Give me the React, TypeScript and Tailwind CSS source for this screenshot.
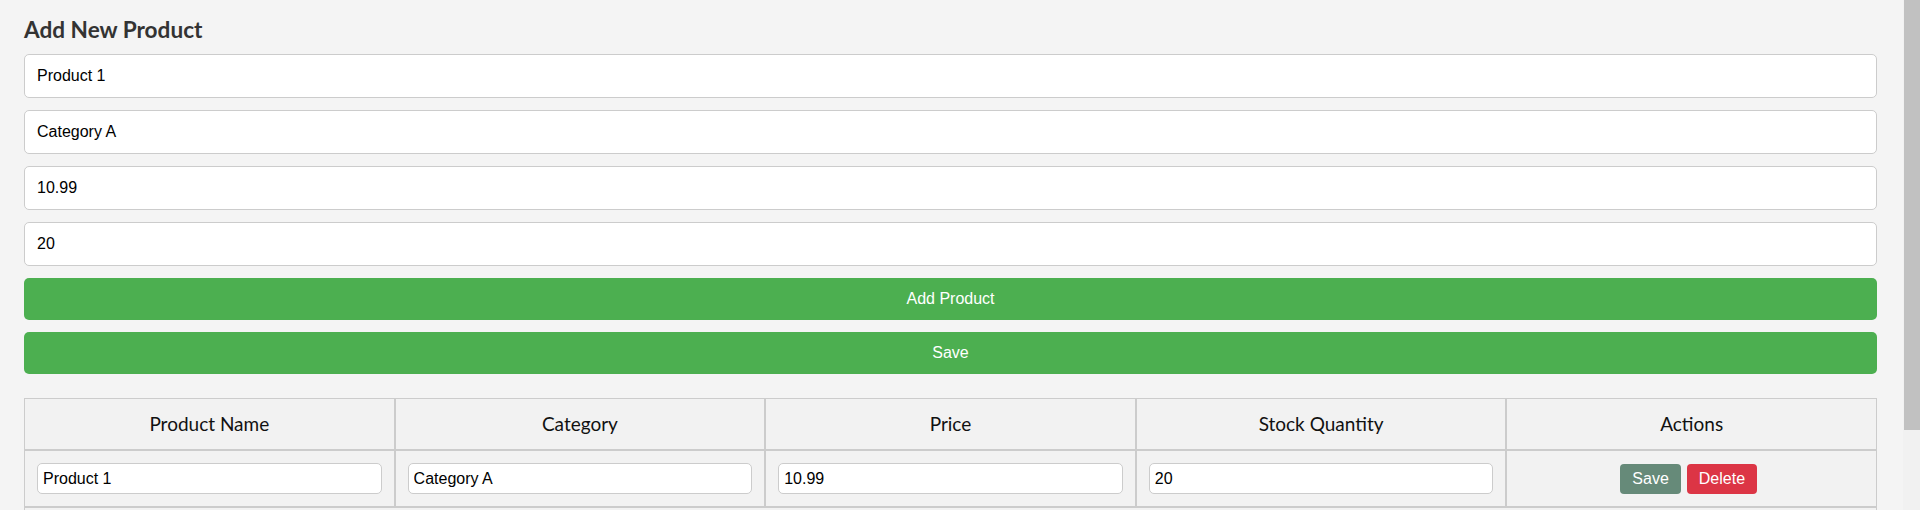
import React from "react";

const inputCls =
  "block w-full h-[44px] px-3 border border-[#cccccc] rounded-[5px] bg-white text-[16px] text-black outline-none";
const cellInputCls =
  "block w-full h-[31px] px-[5px] border border-[#cccccc] rounded-[5px] bg-white text-[16px] text-black outline-none";

export default function App() {
  const cols = ["Product Name", "Category", "Price", "Stock Quantity", "Actions"];
  return (
    <div className="flex h-[510px] overflow-hidden bg-[#f4f4f4]">
      <div
        className="flex-1 min-w-0 pl-6 pr-[26px] pt-[15px]"
        style={{ fontFamily: "Lato, 'Liberation Sans', sans-serif" }}
      >
        <h2 className="m-0 mb-[10px] text-[22.6px] leading-[29px] font-bold text-[#333333]">Add New Product</h2>
        <div className="flex flex-col gap-3" style={{ fontFamily: "'Liberation Sans', Arial, sans-serif" }}>
          <input className={inputCls} defaultValue="Product 1" />
          <input className={inputCls} defaultValue="Category A" />
          <input className={inputCls} defaultValue="10.99" />
          <input className={inputCls} defaultValue="20" />
          <button className="h-[42px] w-full rounded-[5px] bg-[#4caf50] text-white text-[16px]">Add Product</button>
          <button className="h-[42px] w-full rounded-[5px] bg-[#4caf50] text-white text-[16px]">Save</button>
        </div>
        <table className="mt-6 w-full table-fixed border-separate border-spacing-0">
          <thead>
            <tr>
              {cols.map((c) => (
                <th
                  key={c}
                  className="border border-[#cccccc] bg-[#f2f2f2] px-3 py-3 text-center font-normal text-[19px] leading-[26px] text-[#111111]"
                >
                  {c}
                </th>
              ))}
            </tr>
          </thead>
          <tbody style={{ fontFamily: "'Liberation Sans', Arial, sans-serif" }}>
            <tr>
              <td className="border border-[#cccccc] bg-[#f2f2f2] p-3">
                <input className={cellInputCls} defaultValue="Product 1" />
              </td>
              <td className="border border-[#cccccc] bg-[#f2f2f2] p-3">
                <input className={cellInputCls} defaultValue="Category A" />
              </td>
              <td className="border border-[#cccccc] bg-[#f2f2f2] p-3">
                <input className={cellInputCls} defaultValue="10.99" />
              </td>
              <td className="border border-[#cccccc] bg-[#f2f2f2] p-3">
                <input className={cellInputCls} defaultValue="20" />
              </td>
              <td className="border border-[#cccccc] bg-[#f2f2f2] p-3">
                <div className="flex justify-center gap-[6px] pr-[6px]">
                  <button className="h-[30px] px-3 rounded-[4px] bg-[#668a79] text-white text-[16px]">Save</button>
                  <button className="h-[30px] px-3 rounded-[4px] bg-[#dc3545] text-white text-[16px]">Delete</button>
                </div>
              </td>
            </tr>
            <tr>
              <td className="border border-[#cccccc] bg-[#f2f2f2] p-3 h-[57px]" colSpan={5}></td>
            </tr>
          </tbody>
        </table>
      </div>
      <div className="w-[17px] shrink-0 bg-[#f1f1f1] pl-px">
        <div className="h-[430px] w-full bg-[#c1c1c1]"></div>
      </div>
    </div>
  );
}
